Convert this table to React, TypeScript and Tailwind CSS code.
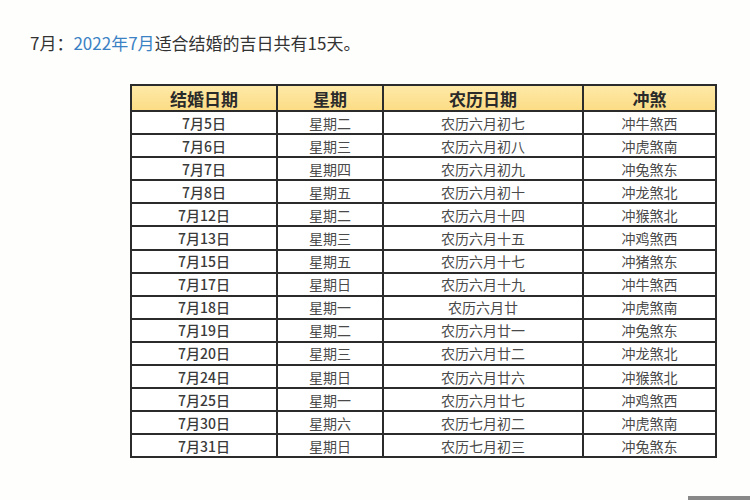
const rows: [string, string, string, string][] = [
  ['7月5日', '星期二', '农历六月初七', '冲牛煞西'],
  ['7月6日', '星期三', '农历六月初八', '冲虎煞南'],
  ['7月7日', '星期四', '农历六月初九', '冲兔煞东'],
  ['7月8日', '星期五', '农历六月初十', '冲龙煞北'],
  ['7月12日', '星期二', '农历六月十四', '冲猴煞北'],
  ['7月13日', '星期三', '农历六月十五', '冲鸡煞西'],
  ['7月15日', '星期五', '农历六月十七', '冲猪煞东'],
  ['7月17日', '星期日', '农历六月十九', '冲牛煞西'],
  ['7月18日', '星期一', '农历六月廿', '冲虎煞南'],
  ['7月19日', '星期二', '农历六月廿一', '冲兔煞东'],
  ['7月20日', '星期三', '农历六月廿二', '冲龙煞北'],
  ['7月24日', '星期日', '农历六月廿六', '冲猴煞北'],
  ['7月25日', '星期一', '农历六月廿七', '冲鸡煞西'],
  ['7月30日', '星期六', '农历七月初二', '冲虎煞南'],
  ['7月31日', '星期日', '农历七月初三', '冲兔煞东'],
]

const headers = ['结婚日期', '星期', '农历日期', '冲煞']
const widths = ['w-[146px]', 'w-[106px]', 'w-[200px]', 'w-[133px]']

export default function App() {
  return (
    <div className="h-[500px] w-[750px] bg-[#fefefd] flex flex-col font-['Noto_Sans_CJK_SC','Noto_Sans',sans-serif] overflow-hidden">
      <p className="pl-[30px] pt-[31px] text-[17px] leading-[24px] text-[#333]">
        7月：<span className="text-[#3b82c4]">2022年7月</span>适合结婚的吉日共有15天。
      </p>
      <div className="pl-[130px] mt-[29px]">
        <table className="border-collapse border-2 border-[#2b2b2b] table-fixed w-[586px]">
          <thead>
            <tr className="h-[26px] bg-gradient-to-b from-[#fde9a8] to-[#fcdc84]">
              {headers.map((h, i) => (
                <th
                  key={h}
                  className={`${widths[i]} border-2 border-[#2b2b2b] text-[17px] leading-none font-bold text-[#2a2a2a]`}
                >
                  {h}
                </th>
              ))}
            </tr>
          </thead>
          <tbody>
            {rows.map((r) => (
              <tr key={r[0]} className="h-[23.1px] bg-white">
                {r.map((c, i) => (
                  <td
                    key={i}
                    className={`border-2 border-[#2b2b2b] text-center text-[14px] leading-none ${
                      i === 0 ? 'font-medium text-[#3a3a3a]' : 'text-[#4a4a4a]'
                    }`}
                  >
                    {c}
                  </td>
                ))}
              </tr>
            ))}
          </tbody>
        </table>
      </div>
      <div className="mt-auto flex justify-end">
        <div className="h-[4px] w-[62px] bg-[#888]" />
      </div>
    </div>
  )
}
